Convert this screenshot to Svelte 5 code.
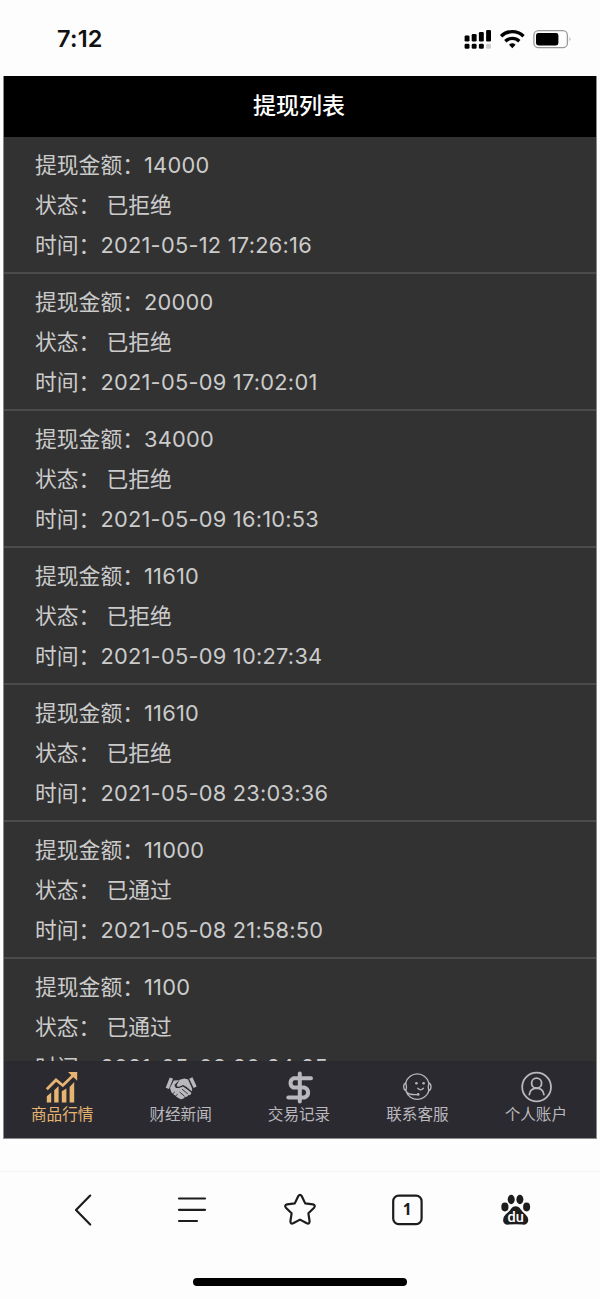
<script lang="ts">
    type Tab = { icon: string; label: string };

    const records = [
        { amount: "14000", status: "已拒绝", time: "2021-05-12 17:26:16" },
        { amount: "20000", status: "已拒绝", time: "2021-05-09 17:02:01" },
        { amount: "34000", status: "已拒绝", time: "2021-05-09 16:10:53" },
        { amount: "11610", status: "已拒绝", time: "2021-05-09 10:27:34" },
        { amount: "11610", status: "已拒绝", time: "2021-05-08 23:03:36" },
        { amount: "11000", status: "已通过", time: "2021-05-08 21:58:50" },
        { amount: "1100", status: "已通过", time: "2021-05-08 20:24:25" },
    ];

    const tabs: Tab[] = [
        { icon: "market", label: "商品行情" },
        { icon: "news", label: "财经新闻" },
        { icon: "trades", label: "交易记录" },
        { icon: "service", label: "联系客服" },
        { icon: "account", label: "个人账户" },
    ];

    let active = $state("market");
</script>

<div class="phone">
    <div class="status-bar">
        <span class="clock">7:12</span>
        <svg class="signals" width="110" height="24" viewBox="0 0 110 24">
            <!-- dual sim signal -->
            <rect x="1.6" y="8.5" width="4.9" height="6" rx="1.2" />
            <rect x="8.7" y="7" width="4.9" height="7.5" rx="1.2" />
            <rect x="15.9" y="5" width="4.9" height="9.5" rx="1.2" />
            <rect x="23.1" y="3" width="4.9" height="11.5" rx="1.2" />
            <rect x="1.6" y="16.8" width="4.9" height="5" rx="1.4" />
            <rect x="8.7" y="16.8" width="4.9" height="5" rx="1.4" />
            <rect x="15.9" y="16.8" width="4.9" height="5" rx="1.4" />
            <rect x="23.1" y="16.8" width="4.9" height="5" rx="1.4" fill="#ccc" />
            <!-- wifi -->
            <g fill="none" stroke="#000" stroke-width="3.4">
                <path d="M38.1 9.2a16 16 0 0 1 22.4 0" />
                <path d="M42.3 14.2a10.2 10.2 0 0 1 14 0" />
            </g>
            <path d="M46 17.8a5 5 0 0 1 6.6 0l-3.3 3.5z" />
            <!-- battery -->
            <rect x="70.9" y="3.7" width="33.5" height="17" rx="4.5" fill="none" stroke="#999" stroke-width="1.3" />
            <rect x="73" y="6" width="22.4" height="12.5" rx="2.4" />
            <path d="M106.6 9.7q1.8 2.4 0 5z" fill="#888" />
        </svg>
    </div>

    <div class="app">
        <header>提现列表</header>
        <ul>
            {#each records as record}
                <li>
                    <p>提现金额：<span>{record.amount}</span></p>
                    <p>状态：&nbsp;{record.status}</p>
                    <p>时间：<span>{record.time}</span></p>
                </li>
            {/each}
        </ul>
        <nav>
            {#each tabs as tab}
                <button class:active={active === tab.icon} onclick={() => (active = tab.icon)}>
                    <svg width="34" height="34" viewBox="0 0 34 34">
                        {#if tab.icon === "market"}
                            <path d="M1.8 32.5v-6.2l4.4-3.8v10zM9.2 32.5V20.2l4.4-4.3v16.6zM16.8 32.5V21.2l4.6-2.6v13.9zM24.6 32.5V17l4.6-5v20.5z" fill="currentColor" />
                            <path d="M1.8 19.3 11 10l6.8 5.5L28.5 5" fill="none" stroke="currentColor" stroke-width="2.8" />
                            <path d="M23 2h9.2v8.8z" fill="currentColor" />
                        {:else if tab.icon === "news"}
                            <g fill="currentColor">
                                <path d="m5.8 7.6 3.3 1.2-4.2 10.3-3.2-1.4zM25.2 8.8l3.2-1.6 4.3 9.3-3.1 1.6z" />
                                <path d="m9.8 10.6 5.4-.4-4.6 4.5q.2 4.2 4.4 3.2l4-1.4q4.5 2.8 8.4 6.3-.2 2.7-3 2.3-.9 2.3-3.1 1.7-2.2 3-5 2.2l-2.8-1.6-5.9-4.6-1.7-4.9z" />
                                <path d="m15.6 9.7 4.8-1.1 3.7.9 3.8 8.4q.9 2.2-.4 3.3-4.2-4.4-8.4-6.1l-4.1 1.7q-2 .4-2.4-1.5z" />
                            </g>
                            <path d="m15.6 22 5 4.3m-2.5-7.1 5.7 4.7M8.3 24l2.5-2.1m.5 4.3 2.3-2" fill="none" stroke="#2b2a30" stroke-width=".9" />
                        {:else if tab.icon === "trades"}
                            <path d="M29 8.2H11.5a5.2 5.2 0 0 0 0 9.4h11a5.2 5.2 0 0 1 0 9.9H6.3M17.8 3.6v28" fill="none" stroke="currentColor" stroke-width="4" stroke-linecap="round" />
                        {:else if tab.icon === "service"}
                            <g fill="none" stroke="currentColor" stroke-width="1.3" stroke-linecap="round">
                                <path d="M5.6 13A12 12 0 0 1 28.9 13M29 20.5A12 12 0 0 1 6 21.1q2.5 4.2 11.5 3.5" />
                                <path d="M5.8 13.2q-2.1.3-2.1 3.6t2.3 3.7q1.1-3.5-.2-7.3zM28.9 13.2q2.1.3 2.1 3.6t-2.3 3.7q-1-3.5.2-7.3z" />
                                <path d="M17.8 18.2q2.8 3.2 5.6 0" />
                            </g>
                            <circle cx="16.4" cy="13.3" r="1.3" fill="currentColor" />
                            <circle cx="23.6" cy="13.3" r="1.3" fill="currentColor" />
                            <circle cx="18.2" cy="24.4" r="1.3" fill="currentColor" />
                        {:else}
                            <g fill="none" stroke="currentColor" stroke-width="1.8" stroke-linecap="round">
                                <circle cx="17.6" cy="17" r="14.4" />
                                <circle cx="17.6" cy="13.2" r="5" />
                                <path d="M10.3 24.7q.8-6.3 7.3-6.5 6.5.2 7.3 6.5" />
                            </g>
                        {/if}
                    </svg>
                    <span>{tab.label}</span>
                </button>
            {/each}
        </nav>
    </div>

    <div class="browser-bar">
        <svg viewBox="0 0 36 36">
            <path d="M24.2 3.6 10 18l14.2 14.5" />
        </svg>
        <svg viewBox="0 0 36 36">
            <path d="M5 6.5h26M5 17.8h26M5 29h18" />
        </svg>
        <svg viewBox="0 0 36 36">
            <path d="M16.2 4.2q1.8-2.6 3.6 0l3.4 7.2 7.7 1q3 .8 1.2 3.3l-5.7 5.6 1.2 8q-.1 3-2.8 2L18 27.6 11.2 31.3q-2.7 1-2.8-2l1.2-8-5.7-5.6q-1.8-2.5 1.2-3.3l7.7-1z" />
        </svg>
        <svg viewBox="0 0 36 36">
            <rect x="4.2" y="3.7" width="28.4" height="28.4" rx="5.5" />
            <text x="18.2" y="23.4" font-size="15.5">1</text>
        </svg>
        <svg viewBox="0 0 36 36" class="baidu">
            <ellipse cx="7.9" cy="15" rx="3.6" ry="4.4" />
            <ellipse cx="14.2" cy="7.5" rx="3.5" ry="4.7" />
            <ellipse cx="22.9" cy="7.5" rx="3.5" ry="4.7" />
            <ellipse cx="29.6" cy="15" rx="3.5" ry="4.4" />
            <path d="M18.6 14.2q3.1 0 5.2 3.3 1.7 2.5 4.7 5 3.4 3 2.6 6.7-1.1 4-5.5 3.4-7-.8-14 0-4.5.5-5.4-3.4-.6-3.9 2.6-6.9 3-2.4 4.8-4.8 2-3.3 5-3.3z" />
            <text x="18.6" y="29.9" font-size="14.5">du</text>
        </svg>
    </div>
    <div class="home-indicator"></div>
</div>

<style>
    :global(body) {
        margin: 0;
        background: #fdfdfd;
    }

    .phone {
        display: flex;
        flex-direction: column;
        width: 600px;
        height: 1299px;
        overflow: hidden;
        background: #fdfdfd;
        font-family: Inter, "Noto Sans CJK SC", sans-serif;
    }

    .status-bar {
        display: flex;
        flex: none;
        align-items: center;
        justify-content: space-between;
        box-sizing: border-box;
        height: 76px;
        padding: 1px 27px 0 57px;
    }
    .clock {
        font-size: 23.5px;
        font-weight: 600;
        letter-spacing: 0.2px;
        color: #111;
    }

    .app {
        display: flex;
        flex: none;
        flex-direction: column;
        height: 1063px;
        margin: 0 3px;
        background: #323232;
        border: solid #8a8a8a;
        border-width: 0 1px 1px;
        box-sizing: border-box;
    }
    header {
        flex: none;
        height: 61px;
        line-height: 61px;
        padding-right: 2px;
        background: #000;
        color: #fff;
        font-size: 23px;
        font-weight: 500;
        text-align: center;
    }
    ul {
        flex: 1;
        min-height: 0;
        margin: 0;
        padding: 0;
        overflow: hidden;
        list-style: none;
    }
    li {
        height: 137px;
        padding: 8px 31px 0;
        box-sizing: border-box;
        border-bottom: 2px solid #4b4b4b;
    }
    p {
        height: 40px;
        margin: 0;
        line-height: 40px;
        font-size: 21.8px;
        color: #cbcbcb;
        white-space: nowrap;
    }
    p span {
        letter-spacing: 0.25px;
    }

    nav {
        display: flex;
        flex: none;
        height: 77px;
        background: #2b2a30;
    }
    button {
        display: flex;
        flex: 1;
        flex-direction: column;
        align-items: center;
        padding: 9px 2px 0 0;
        border: 0;
        background: none;
        color: #b9b8bc;
        font: 15.6px/21px Inter, "Noto Sans CJK SC", sans-serif;
    }
    button.active {
        color: #e5b571;
    }
    button span {
        white-space: nowrap;
    }

    .browser-bar {
        display: flex;
        flex: none;
        align-items: center;
        justify-content: space-between;
        height: 76px;
        margin-top: 32px;
        padding: 0 67px 0 66px;
        border-top: 1px solid #f3f3f3;
    }
    .browser-bar svg {
        width: 36px;
        height: 36px;
        fill: none;
        stroke: #1d1d1d;
        stroke-width: 2.2;
        stroke-linecap: round;
        stroke-linejoin: round;
    }
    .browser-bar text {
        fill: #1d1d1d;
        stroke: none;
        font-family: "Noto Sans", sans-serif;
        font-weight: 700;
        text-anchor: middle;
    }
    .browser-bar .baidu {
        fill: #1d1d1d;
        stroke: none;
    }
    .browser-bar .baidu text {
        fill: #fff;
        font-family: Roboto, sans-serif;
        font-weight: 500;
    }

    .home-indicator {
        width: 214px;
        height: 8px;
        margin: 30px auto 0;
        border-radius: 4px;
        background: #000;
    }
</style>
